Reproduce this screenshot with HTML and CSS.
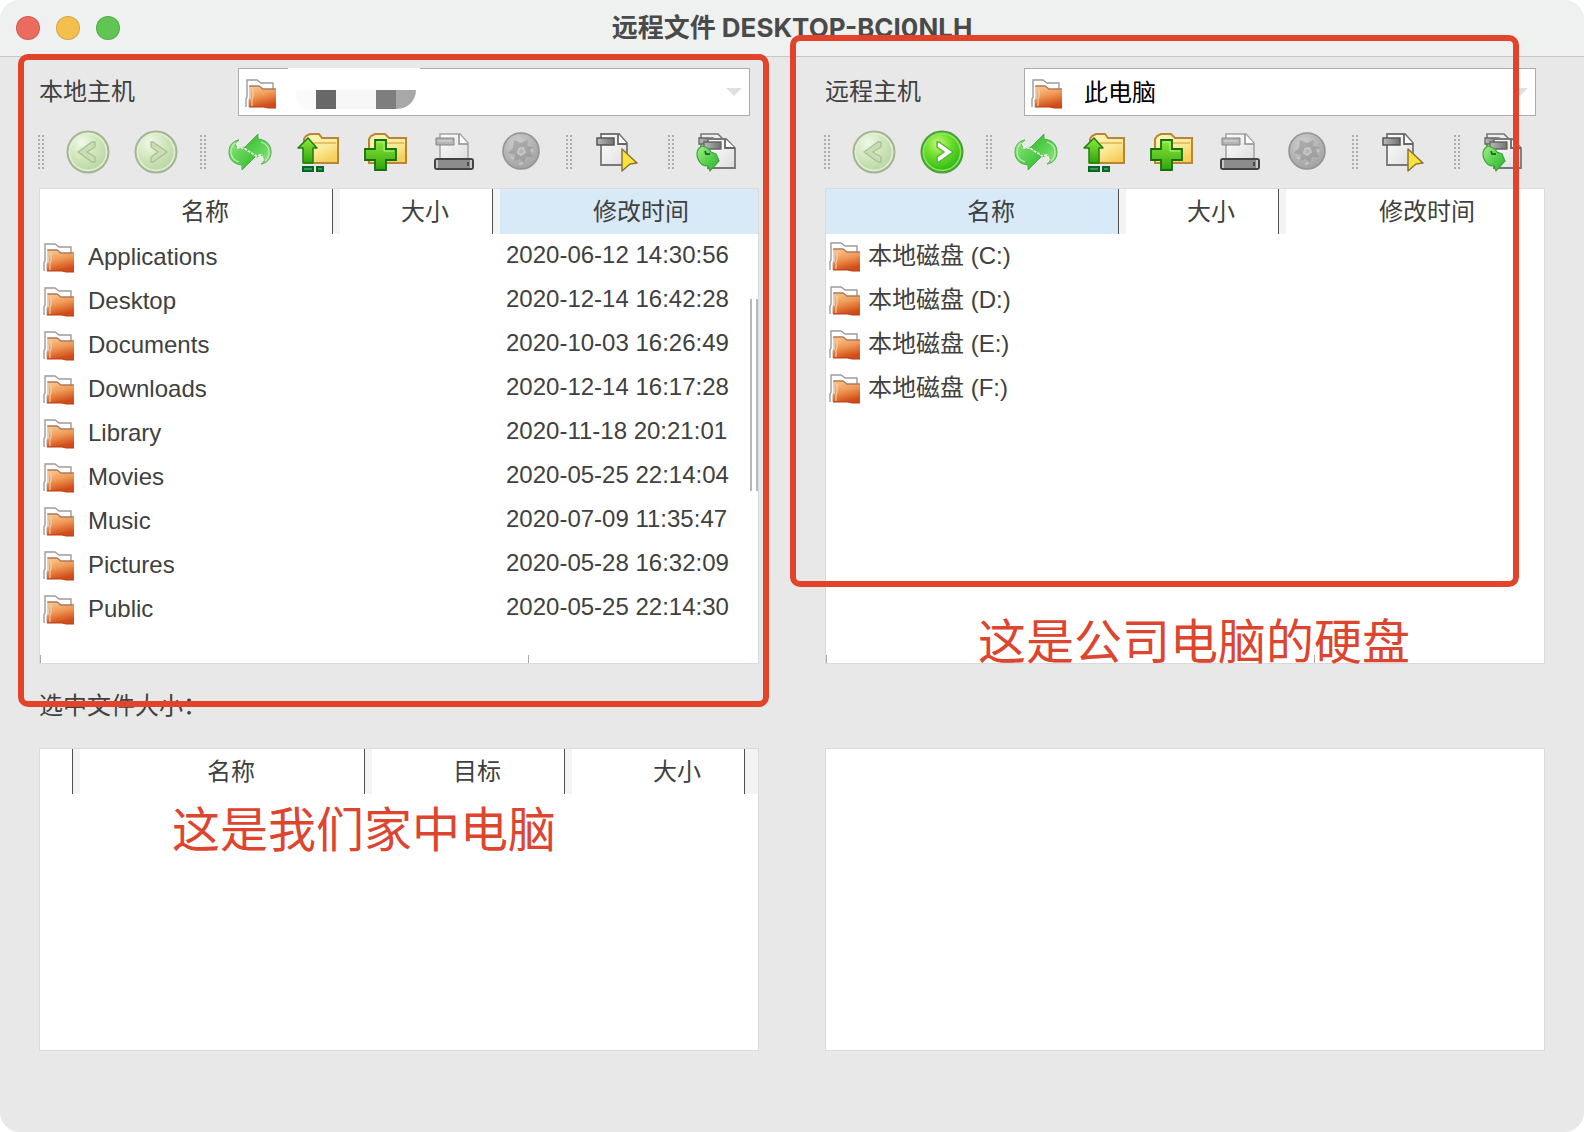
FILE: index.html
```html
<!DOCTYPE html>
<html lang="zh-CN">
<head>
<meta charset="utf-8">
<title>远程文件 DESKTOP-BCI0NLH</title>
<link rel="stylesheet" href="styles.css">
</head>
<body>
<svg class="defs" aria-hidden="true">
  <defs>
    <linearGradient id="g-orange" x1="0" y1="0" x2="0.3" y2="1"><stop offset="0" stop-color="#f9cd96"/><stop offset="0.5" stop-color="#f09a58"/><stop offset="1" stop-color="#d14c16"/></linearGradient>
    <linearGradient id="g-yellow" x1="0" y1="0" x2="0.6" y2="1"><stop offset="0" stop-color="#fff6b8"/><stop offset="0.6" stop-color="#fbea9a"/><stop offset="1" stop-color="#f6cf5c"/></linearGradient>
    <linearGradient id="g-green" x1="0" y1="0" x2="0" y2="1"><stop offset="0" stop-color="#8fe83c"/><stop offset="1" stop-color="#2fa50c"/></linearGradient>
    <linearGradient id="g-leaf" x1="0" y1="0" x2="1" y2="1"><stop offset="0" stop-color="#2fb92f"/><stop offset="0.55" stop-color="#5fd255"/><stop offset="1" stop-color="#9be68c"/></linearGradient>
    <linearGradient id="g-blob" x1="0" y1="0" x2="1" y2="1"><stop offset="0" stop-color="#a9ec92"/><stop offset="0.5" stop-color="#5bd150"/><stop offset="1" stop-color="#2bb02f"/></linearGradient>
    <radialGradient id="g-pale" cx="0.35" cy="0.28" r="0.8"><stop offset="0" stop-color="#f2f8e8"/><stop offset="0.5" stop-color="#cfe5b9"/><stop offset="1" stop-color="#b4d1a0"/></radialGradient>
    <radialGradient id="g-live" cx="0.4" cy="0.3" r="0.75"><stop offset="0" stop-color="#c9f67c"/><stop offset="0.4" stop-color="#6fe02c"/><stop offset="1" stop-color="#22b010"/></radialGradient>
    <radialGradient id="g-ball" cx="0.4" cy="0.3" r="0.8"><stop offset="0" stop-color="#cfcfcf"/><stop offset="1" stop-color="#9c9c9c"/></radialGradient>
    <linearGradient id="g-page" x1="0" y1="0" x2="1" y2="1"><stop offset="0" stop-color="#fff"/><stop offset="1" stop-color="#dedede"/></linearGradient>
    <linearGradient id="g-tag" x1="0" y1="0" x2="1" y2="0"><stop offset="0" stop-color="#bbb"/><stop offset="1" stop-color="#707070"/></linearGradient>
  </defs>
  <symbol id="folder" viewBox="0 0 32 30">
    <path d="M1 28V20L2 18V1H12L16 4H28V10" fill="#fff" stroke="#9c9c9c" stroke-width="1.4"/>
    <path d="M4 28V21L5 19V8" fill="none" stroke="#b9a59a"/>
    <path d="M5 7H14L18 10H31V29H23L19 28H4V21L6 19Z" fill="url(#g-orange)"/>
    <path d="M5 8V7H14L18 10H31" fill="none" stroke="#b0785a" stroke-width="1.4"/>
    <path d="M7 27V20L8 18V10" fill="none" stroke="#fbd7b0"/>
    <path d="M4 28H19L23 29H31" fill="none" stroke="#b3401b"/>
  </symbol>
  <symbol id="back" viewBox="0 0 44 44">
    <circle cx="22" cy="22" r="20.5" fill="url(#g-pale)" stroke="#a3b594" stroke-width="2"/>
    <circle cx="22" cy="22" r="18.5" fill="none" stroke="#e3efd8" stroke-width="1.5"/>
    <path d="M12 22L26 12H29V17L21 22L29 27V32H26Z" fill="#c9ddb6" stroke="#a9c193" stroke-width="1.3"/>
  </symbol>
  <symbol id="forward" viewBox="0 0 44 44">
    <circle cx="22" cy="22" r="20.5" fill="url(#g-pale)" stroke="#a3b594" stroke-width="2"/>
    <circle cx="22" cy="22" r="18.5" fill="none" stroke="#e3efd8" stroke-width="1.5"/>
    <path d="M33 22L19 12H17V17L24 22L17 27V32H19Z" fill="#c9ddb6" stroke="#a9c193" stroke-width="1.3"/>
  </symbol>
  <symbol id="forward-live" viewBox="0 0 44 44">
    <circle cx="22" cy="22" r="20.5" fill="url(#g-live)" stroke="#4d9e3c" stroke-width="2"/>
    <circle cx="22" cy="22" r="18.5" fill="none" stroke="#8be860" stroke-width="1.5"/>
    <path d="M33 22L19 12H17V17L24 22L17 27V32H19Z" fill="#fff" stroke="#57b53a" stroke-width="1.5"/>
  </symbol>
  <symbol id="refresh" viewBox="0 0 44 44">
    <g id="swirl">
      <path d="M30 4V9C39 10 43 15 43 22C43 29 39 33 33 34C35 33 37 31 36 28L33 25L28 27L16 18Z" fill="url(#g-leaf)" stroke="#4fae48"/>
      <path d="M33 12C39 14 41 18 41 22C41 26 39 29 37 31" fill="none" stroke="#b9efae" stroke-width="1.2"/>
    </g>
    <use href="#swirl" transform="rotate(180 22 22)"/>
    <path d="M8 13L10 18L16 18L28 26L33 25L36 30" fill="none" stroke="#e9f9e4" stroke-width="1.6" stroke-dasharray="3 1"/>
  </symbol>
  <symbol id="up" viewBox="0 0 44 44">
    <path d="M8 33V9L10 6L14 4H23L26 8H42V33Z" fill="url(#g-yellow)" stroke="#b98638" stroke-width="2"/>
    <path d="M18 13H40" stroke="#e0b352" stroke-width="1.5"/>
    <path d="M12 8L21 18H17V33H7V18H2Z" fill="url(#g-green)" stroke="#1f7d12" stroke-width="1.5" stroke-linejoin="round"/>
    <path d="M7 37H17V41H7ZM21 37H27V41H21Z" fill="#2fa04a" stroke="#0b6427" stroke-width="2"/>
  </symbol>
  <symbol id="add" viewBox="0 0 44 44">
    <path d="M5 33V9L7 6L11 4H21L25 8H42V33Z" fill="url(#g-yellow)" stroke="#b98638" stroke-width="2"/>
    <path d="M22 13H40" stroke="#e0b352" stroke-width="1.5"/>
    <path d="M11 10H22V19H32V30H22V40H11V30H1V19H11Z" fill="url(#g-green)" stroke="#14700f" stroke-width="1.8"/>
    <path d="M13 12H20V21H30" fill="none" stroke="#b5f27c"/>
  </symbol>
  <symbol id="drive" viewBox="0 0 44 44">
    <path d="M8 29V4H28L36 13V29Z" fill="url(#g-page)" stroke="#a3a3a3" stroke-width="1.5"/>
    <path d="M27 4V14H36" fill="#fff" stroke="#8c8c8c" stroke-width="1.5"/>
    <path d="M4 8H22V15H4Z" fill="#b4b4b4" stroke="#858585"/>
    <path d="M6 11H20" stroke="#d0d0d0" stroke-width="1.5"/>
    <rect x="3" y="29" width="38" height="10" rx="2" fill="#8c8c8c" stroke="#444" stroke-width="2"/>
    <path d="M5 30V38M39 30V38" stroke="#ddd" stroke-width="1.5"/>
    <path d="M36 32V36" stroke="#333" stroke-width="1.5"/>
  </symbol>
  <symbol id="ball" viewBox="0 0 44 44">
    <circle cx="21" cy="21" r="18" fill="url(#g-ball)" stroke="#949494" stroke-width="1.6"/>
    <path d="M14 10L21 13L28 10L27 16L34 17L30 21L33 27L26 27L24 33L20 29L14 31L15 25L8 23L13 18Z" fill="#929292" opacity="0.6"/>
    <path d="M19 19L23 18L25 22L21 25L18 23ZM19 9H23M9 19L12 17M31 19L33 22M19 34L23 33M11 27L14 29" fill="#b2b2b2" stroke="#c6c6c6" stroke-width="2"/>
  </symbol>
  <symbol id="select-doc" viewBox="0 0 44 44">
    <path d="M7 35V4H25L33 13V35Z" fill="url(#g-page)" stroke="#777" stroke-width="1.8"/>
    <path d="M24 4V14H33" fill="#fff" stroke="#666" stroke-width="1.8"/>
    <path d="M3 8H20V15H3Z" fill="url(#g-tag)" stroke="#555" stroke-width="1.5"/>
    <path d="M28 19L43 33L36 34L28 41Z" fill="#fce23b" stroke="#8a7434" stroke-width="1.5" stroke-linejoin="round"/>
  </symbol>
  <symbol id="sync-doc" viewBox="0 0 44 44">
    <path d="M5 27V4H22L28 10V27Z" fill="#eee" stroke="#777" stroke-width="1.6"/>
    <path d="M3 8H17V14H3Z" fill="url(#g-tag)" stroke="#666" stroke-width="1.3"/>
    <path d="M12 38V9H30L39 18V38Z" fill="url(#g-page)" stroke="#777" stroke-width="1.8"/>
    <path d="M29 9V18H39" fill="#fff" stroke="#666" stroke-width="1.8"/>
    <path d="M8 12H25V19H8Z" fill="url(#g-tag)" stroke="#666" stroke-width="1.3"/>
    <path d="M6 16C1 18 0 24 2 29C4 34 8 36 12 36L14 41L23 31L20 24L15 22L13 19L9 17Z" fill="url(#g-blob)" stroke="#3aa536" stroke-width="1.2"/>
    <path d="M9 21L10 24L14 24" fill="none" stroke="#1f6e22" stroke-width="1.8"/>
  </symbol>
</svg>

<div class="window">
  <header class="titlebar">
    <div class="lights">
      <button class="light light-close" aria-label="关闭"></button>
      <button class="light light-min" aria-label="最小化"></button>
      <button class="light light-max" aria-label="最大化"></button>
    </div>
    <h1 class="title">远程文件 DESKTOP-BCI0NLH</h1>
  </header>

  <main class="panes">
    <section class="pane">
      <div class="browser">
        <div class="host">
          <label class="host-label" for="local-host">本地主机</label>
          <div class="combo">
            <svg class="folder-icon combo-icon"><use href="#folder"/></svg>
            <select class="combo-select" id="local-host"><option>&nbsp;</option></select>
            <span class="combo-arrow"></span>
            <span class="mask-edge"></span>
            <span class="mask"><i class="m-dark"></i><i class="m-light"></i><i class="m-mid"></i><i class="m-soft"></i></span>
          </div>
        </div>
        <div class="toolbar">
          <div class="tool-group"><button class="tool" aria-label="后退" disabled><svg><use href="#back"/></svg></button><button class="tool" aria-label="前进" disabled><svg><use href="#forward"/></svg></button></div>
          <div class="tool-group"><button class="tool" aria-label="刷新"><svg><use href="#refresh"/></svg></button><button class="tool" aria-label="上级目录"><svg><use href="#up"/></svg></button><button class="tool" aria-label="新建文件夹"><svg><use href="#add"/></svg></button><button class="tool" aria-label="磁盘" disabled><svg><use href="#drive"/></svg></button><button class="tool" aria-label="停止" disabled><svg><use href="#ball"/></svg></button></div>
          <div class="tool-group tool-group-select"><button class="tool" aria-label="选择"><svg><use href="#select-doc"/></svg></button></div>
          <div class="tool-group"><button class="tool" aria-label="传输"><svg><use href="#sync-doc"/></svg></button></div>
        </div>
        <div class="list list-files">
          <table class="files">
            <colgroup><col class="col-name"><col class="col-size"><col></colgroup>
            <thead><tr><th class="wide">名称</th><th>大小</th><th class="time sorted">修改时间</th></tr></thead>
            <tbody>
              <tr><td><span class="entry"><svg class="folder-icon"><use href="#folder"/></svg>Applications</span></td><td></td><td class="date">2020-06-12 14:30:56</td></tr>
              <tr><td><span class="entry"><svg class="folder-icon"><use href="#folder"/></svg>Desktop</span></td><td></td><td class="date">2020-12-14 16:42:28</td></tr>
              <tr><td><span class="entry"><svg class="folder-icon"><use href="#folder"/></svg>Documents</span></td><td></td><td class="date">2020-10-03 16:26:49</td></tr>
              <tr><td><span class="entry"><svg class="folder-icon"><use href="#folder"/></svg>Downloads</span></td><td></td><td class="date">2020-12-14 16:17:28</td></tr>
              <tr><td><span class="entry"><svg class="folder-icon"><use href="#folder"/></svg>Library</span></td><td></td><td class="date">2020-11-18 20:21:01</td></tr>
              <tr><td><span class="entry"><svg class="folder-icon"><use href="#folder"/></svg>Movies</span></td><td></td><td class="date">2020-05-25 22:14:04</td></tr>
              <tr><td><span class="entry"><svg class="folder-icon"><use href="#folder"/></svg>Music</span></td><td></td><td class="date">2020-07-09 11:35:47</td></tr>
              <tr><td><span class="entry"><svg class="folder-icon"><use href="#folder"/></svg>Pictures</span></td><td></td><td class="date">2020-05-28 16:32:09</td></tr>
              <tr><td><span class="entry"><svg class="folder-icon"><use href="#folder"/></svg>Public</span></td><td></td><td class="date">2020-05-25 22:14:30</td></tr>
            </tbody>
          </table>
          <div class="track"></div>
          <span class="scrollbar"></span>
        </div>
        <span class="frame frame-local"></span>
      </div>
      <p class="status">选中文件大小：</p>
      <div class="list list-queue">
        <table class="files">
          <colgroup><col class="col-mark"><col class="col-qname"><col class="col-target"><col class="col-qsize"><col></colgroup>
          <thead><tr><th></th><th>名称</th><th>目标</th><th class="wide">大小</th><th class="rest"></th></tr></thead>
        </table>
        <p class="note note-local">这是我们家中电脑</p>
      </div>
    </section>

    <section class="pane">
      <div class="browser">
        <div class="host">
          <label class="host-label" for="remote-host">远程主机</label>
          <div class="combo">
            <svg class="folder-icon combo-icon"><use href="#folder"/></svg>
            <select class="combo-select" id="remote-host"><option>此电脑</option></select>
            <span class="combo-arrow"></span>
          </div>
        </div>
        <div class="toolbar">
          <div class="tool-group"><button class="tool" aria-label="后退" disabled><svg><use href="#back"/></svg></button><button class="tool" aria-label="前进"><svg><use href="#forward-live"/></svg></button></div>
          <div class="tool-group"><button class="tool" aria-label="刷新"><svg><use href="#refresh"/></svg></button><button class="tool" aria-label="上级目录"><svg><use href="#up"/></svg></button><button class="tool" aria-label="新建文件夹"><svg><use href="#add"/></svg></button><button class="tool" aria-label="磁盘" disabled><svg><use href="#drive"/></svg></button><button class="tool" aria-label="停止" disabled><svg><use href="#ball"/></svg></button></div>
          <div class="tool-group tool-group-select"><button class="tool" aria-label="选择"><svg><use href="#select-doc"/></svg></button></div>
          <div class="tool-group"><button class="tool" aria-label="传输"><svg><use href="#sync-doc"/></svg></button></div>
        </div>
        <div class="list list-files">
          <table class="files files-remote">
            <colgroup><col class="col-name"><col class="col-size"><col></colgroup>
            <thead><tr><th class="wide sorted">名称</th><th>大小</th><th class="time">修改时间</th></tr></thead>
            <tbody>
              <tr><td><span class="entry"><svg class="folder-icon"><use href="#folder"/></svg>本地磁盘 (C:)</span></td><td></td><td></td></tr>
              <tr><td><span class="entry"><svg class="folder-icon"><use href="#folder"/></svg>本地磁盘 (D:)</span></td><td></td><td></td></tr>
              <tr><td><span class="entry"><svg class="folder-icon"><use href="#folder"/></svg>本地磁盘 (E:)</span></td><td></td><td></td></tr>
              <tr><td><span class="entry"><svg class="folder-icon"><use href="#folder"/></svg>本地磁盘 (F:)</span></td><td></td><td></td></tr>
            </tbody>
          </table>
          <div class="track"></div>
          <p class="note note-remote">这是公司电脑的硬盘</p>
        </div>
        <span class="frame frame-remote"></span>
      </div>
      <p class="status"></p>
      <div class="list list-queue"></div>
    </section>
  </main>
</div>
</body>
</html>
```

FILE: styles.css
```css
* { box-sizing: border-box; }

body {
  margin: 0;
  background: #fff;
  color: #404040;
  font: 24px/32px "Liberation Sans", "Noto Sans CJK SC", sans-serif;
}

p, h1 { margin: 0; }

button {
  padding: 0;
  border: 0;
  background: none;
}

.defs {
  position: absolute;
  width: 0;
  height: 0;
}

.window {
  display: flex;
  flex-direction: column;
  min-height: 100vh;
  border-radius: 20px;
  background: #e8e8e8;
}

/* Title bar */
.titlebar {
  display: grid;
  grid-template-columns: 1fr auto 1fr;
  align-items: center;
  height: 57px;
  padding: 0 16px;
  border-bottom: 1px solid #c6c6c6;
  border-radius: 20px 20px 0 0;
  background: #eff1f0;
}

.lights {
  display: flex;
  gap: 16px;
}

.light {
  width: 24px;
  height: 24px;
  border: 1px solid #0002;
  border-radius: 50%;
}

.light-close { background: #ed6a5f; }
.light-min { background: #f5bf4f; }
.light-max { background: #61c554; }

.title {
  color: #4a4a4a;
  font: 700 26px/32px Inter, "Noto Sans CJK SC", sans-serif;
}

/* Panes */
.panes {
  display: grid;
  grid-template-columns: 1fr 1fr;
  gap: 66px;
  flex: 1;
  padding: 11px 39px 81px;
}

.pane {
  display: flex;
  flex-direction: column;
  min-width: 0;
}

.browser { position: relative; }

.host {
  display: flex;
  align-items: center;
  justify-content: space-between;
  padding-right: 9px;
}

.combo {
  position: relative;
  flex: 0 0 512px;
}

.combo-select {
  display: block;
  width: 100%;
  height: 48px;
  padding: 2px 32px 0 59px;
  border: 1px solid #acacac;
  border-radius: 0;
  appearance: none;
  background: #fff;
  color: #000;
  font: inherit;
}

.folder-icon {
  flex: none;
  width: 32px;
  height: 30px;
}

.combo-icon {
  position: absolute;
  top: 11px;
  left: 7px;
}

.combo-arrow {
  position: absolute;
  top: 20px;
  right: 8px;
  border: 8px solid transparent;
  border-top-color: #e0e0e0;
  border-bottom: 0;
}

.mask-edge {
  position: absolute;
  top: 0;
  left: 50px;
  width: 132px;
  height: 2px;
  background: #fff;
}

.mask {
  position: absolute;
  top: 22px;
  left: 58px;
  display: flex;
  width: 120px;
  height: 19px;
  padding-left: 20px;
  border-radius: 4px 0 20px 12px;
  background: #fafafa;
  overflow: hidden;
}

.mask i { width: 20px; }
.m-dark { background: #686868; }
.m-mid { background: #7e7e7e; }
.m-soft { background: #a8a8a8; }
.mask .m-light { width: 40px; background: #f7f7f7; }

/* Toolbar */
.toolbar {
  display: flex;
  gap: 23px;
  padding: 14px 0;
}

.tool-group {
  display: flex;
  gap: 24px;
}

.tool-group-select { margin-right: 8px; }

.tool-group::before {
  content: "";
  width: 6px;
  height: 34px;
  margin: 5px -2px 5px -1px;
  background: repeating-conic-gradient(from 270deg, #adadad 0 25%, #e8e8e8 0 100%) 0 0 / 4px 4px;
}

.tool {
  width: 44px;
  height: 44px;
}

.tool svg {
  display: block;
  width: 44px;
  height: 44px;
}

/* Lists */
.list {
  position: relative;
  display: flex;
  flex-direction: column;
  border: 1px solid #dadada;
  background: #fff;
}

.list-files { min-height: 476px; }

.list-queue {
  flex: 1;
  min-height: 302px;
}

.files {
  width: 100%;
  table-layout: fixed;
  border-spacing: 0;
}

.col-name { width: 293px; }
.col-size { width: 160px; }
.col-mark { width: 33px; }
.col-qname { width: 292px; }
.col-target { width: 200px; }
.col-qsize { width: 180px; }

th {
  height: 45px;
  padding: 0 0 0 18px;
  border-right: 1px solid #505050;
  border-left: 7px solid #f4f4f4;
  font-weight: 400;
}

th:first-child { border-left: 0; padding-left: 0; }
th:last-child { border-right: 0; }
th.wide { padding-left: 38px; }
th.time { padding-left: 24px; }
th.sorted { background: #d8e9f7; }
th.rest { background: #f4f4f4; }

td {
  height: 44px;
  padding: 2px 0 0;
}

td.date { padding: 0 0 2px 13px; }

.entry {
  display: flex;
  align-items: center;
  gap: 13px;
  padding-left: 3px;
}

.entry .folder-icon { margin-top: 2px; }

.files-remote .entry { gap: 7px; }
.files-remote td { padding-top: 0; }

.track {
  width: 489px;
  height: 8px;
  margin-top: auto;
  border: solid #a8a8a8;
  border-width: 0 1px;
}

.scrollbar {
  position: absolute;
  top: 110px;
  right: 0;
  width: 8px;
  height: 192px;
  border: solid #b4b6b8;
  border-width: 0 2px;
}

.status {
  height: 84px;
  padding-top: 26px;
}

/* Annotations drawn over the window */
.frame {
  position: absolute;
  z-index: 1;
  border: 6px solid #e2432b;
  border-radius: 10px;
  pointer-events: none;
}

.frame-local { inset: -14px -10px -43px -21px; }
.frame-remote { inset: -33px 26px 77px -35px; }

.note {
  position: absolute;
  color: #dd452f;
  font-size: 48px;
  line-height: 64px;
  white-space: nowrap;
}

.note-local { top: 50px; left: 132px; }
.note-remote { right: 134px; bottom: -12px; }
```
